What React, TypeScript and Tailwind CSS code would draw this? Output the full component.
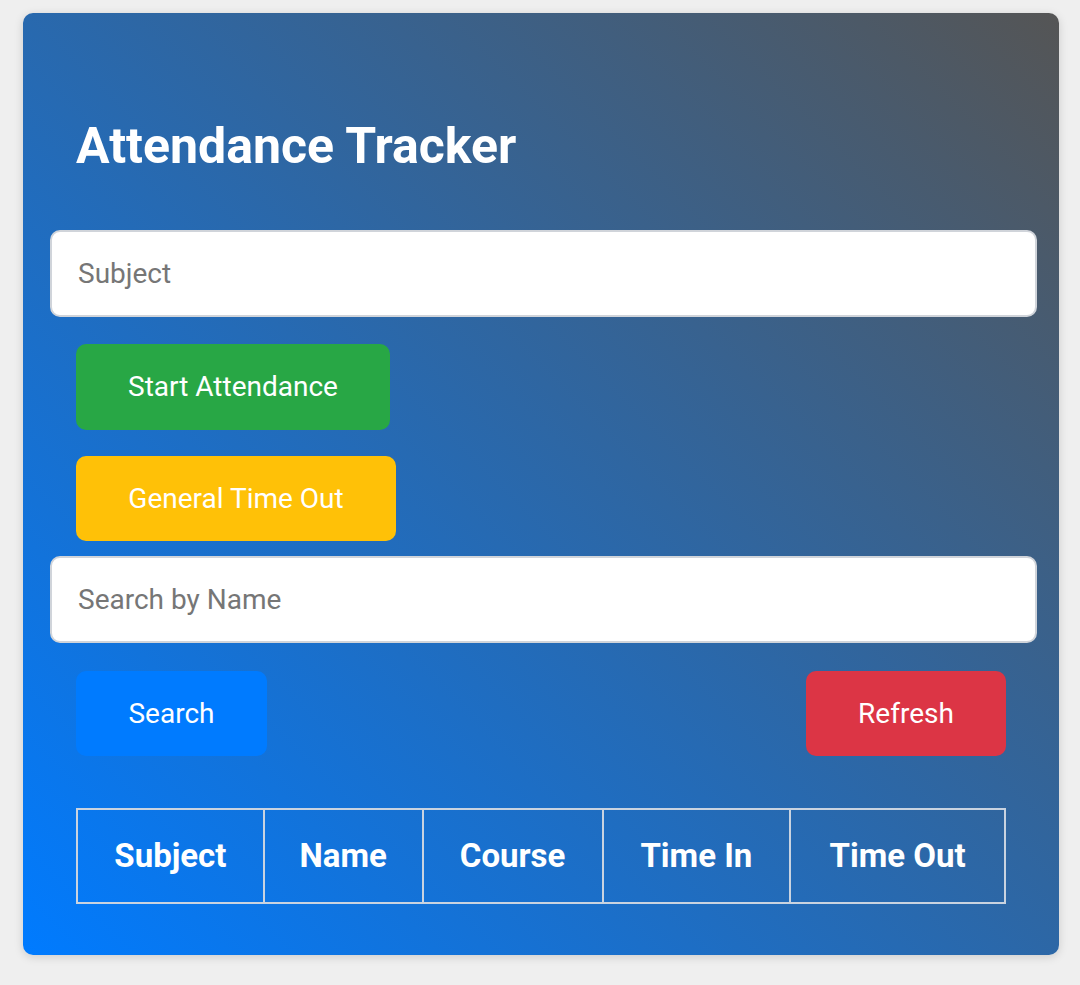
import React, { useState } from 'react';

const headers = ['Subject', 'Name', 'Course', 'Time In', 'Time Out'];
const colWidths = ['w-[187px]', 'w-[159px]', 'w-[180px]', 'w-[188px]', 'w-[215px]'];

export default function App() {
  const [subject, setSubject] = useState('');
  const [search, setSearch] = useState('');

  return (
    <div className="min-h-[985px] w-[1080px] bg-[#efefef] pt-[13px] pl-[23px] font-['Roboto',sans-serif]">
      <div className="flex w-[1036px] h-[942px] flex-col rounded-[10px] bg-[linear-gradient(45deg,#007bff,#555)] px-[27px] shadow-[0_2px_10px_rgba(0,0,0,0.15)]">
        {/* Title */}
        <h1 className="ml-[26px] mt-[105px] text-[50px] font-bold leading-[56px] text-white">
          Attendance Tracker
        </h1>

        {/* Subject input */}
        <input
          value={subject}
          onChange={(e) => setSubject(e.target.value)}
          placeholder="Subject"
          className="mt-[56px] h-[87px] w-[987px] rounded-[10px] border-2 border-[#d0d4da] bg-white px-[26px] text-[28px] text-gray-800 outline-none placeholder:text-[#767676]"
        />

        {/* Action buttons */}
        <div className="ml-[26px] mt-[27px] flex flex-col items-start gap-[26px]">
          <button className="h-[86px] w-[314px] rounded-[10px] bg-[#28a745] text-[28px] text-white">
            Start Attendance
          </button>
          <button className="h-[85px] w-[320px] rounded-[10px] bg-[#ffc107] text-[28px] text-white">
            General Time Out
          </button>
        </div>

        {/* Search input */}
        <input
          value={search}
          onChange={(e) => setSearch(e.target.value)}
          placeholder="Search by Name"
          className="mt-[15px] h-[87px] w-[987px] rounded-[10px] border-2 border-[#d0d4da] bg-white px-[26px] text-[28px] text-gray-800 outline-none placeholder:text-[#767676]"
        />

        {/* Search / Refresh */}
        <div className="mx-[26px] mt-[28px] flex items-center justify-between">
          <button className="h-[85px] w-[191px] rounded-[10px] bg-[#007bff] text-[28px] text-white">
            Search
          </button>
          <button className="h-[85px] w-[200px] rounded-[10px] bg-[#dc3545] text-[28px] text-white">
            Refresh
          </button>
        </div>

        {/* Attendance table */}
        <table className="ml-[26px] mt-[52px] w-[930px] border-collapse">
          <thead>
            <tr>
              {headers.map((h, i) => (
                <th
                  key={h}
                  className={`${colWidths[i]} h-[94px] border-2 border-[#c9d3e0] text-center text-[33px] font-bold text-white`}
                >
                  {h}
                </th>
              ))}
            </tr>
          </thead>
          <tbody />
        </table>
      </div>
    </div>
  );
}
